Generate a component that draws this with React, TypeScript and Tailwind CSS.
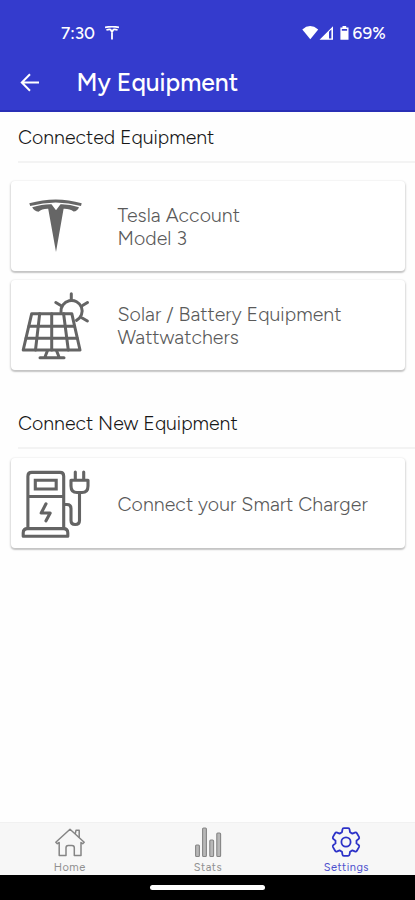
import type { ReactNode } from 'react';

const TeslaIcon = () => (
    <svg width="80" height="80" viewBox="0 0 80 80" fill="#666666">
        <path d="M14.3 17.3Q41 9.7 66.7 17.3L66 20Q41 13 15.2 20Z" />
        <path d="M17.2 21.2Q28 18 36.5 18.3L41 24.3L45.5 18.3Q54 18 64 21.2Q62.5 25 58.5 25.6Q55 22.6 48.6 22.8L41 66L33.2 22.8Q27 22.6 23.5 25.8Q19 25 17.2 21.2Z" />
    </svg>
);

const SolarIcon = () => (
    <svg width="80" height="80" viewBox="0 0 80 80" fill="none" stroke="#646464" strokeWidth="3" strokeLinecap="round" strokeLinejoin="round">
        <path d="M46 27A10.6 10.6 0 1 1 61.5 35.4" />
        <path d="M56.3 8.8v6M40.8 17.5l5 3M72.5 17.5l-5 3M67.2 33l5.2 3" />
        <path d="M16.7 28.7H56.8L65 65H8.2Z" />
        <path d="M14 41.2H59.5M11 53.3H62.2M24.7 28.7L20.5 65M36.7 28.7V65M48.6 28.7L53.3 65M32.5 65.5L30 72M41.5 65.5L44 72M25 72.8H49" />
    </svg>
);

const ChargerIcon = () => (
    <svg width="80" height="80" viewBox="0 0 80 80" fill="none" stroke="#646464" strokeWidth="3.1" strokeLinecap="round" strokeLinejoin="round">
        <path d="M12.9 65V13.2Q12.9 9.4 16.7 9.4H45Q48.7 9.4 48.7 13.2V65M12.9 33.5H48.7" />
        <path d="M8.2 73.3V70Q8.2 65.6 12.5 65.6H48.5Q52.8 65.6 52.8 70V73.3Z" />
        <path d="M20.3 17.2H41.2V26H20.3Z" strokeLinejoin="miter" />
        <path d="M31 40.8L26.2 50H35.2L31 57.8" />
        <path d="M49.5 41.5H52Q56 41.5 56 45.5V57.5Q56 61.5 60.2 61.5Q64.5 61.5 64.5 57.5V29.5" />
        <path d="M56 17.2H73V23Q73 29.5 67 29.5H62Q56 29.5 56 23ZM60.3 9v8M68.7 9v8" />
    </svg>
);

const HomeIcon = () => (
    <svg width="32" height="30" viewBox="0 0 32 30" fill="none" stroke="#858585" strokeWidth="1.5" strokeLinejoin="round" strokeLinecap="round">
        <path d="M1.8 15.2L16 2.2L30.2 15.2L28.7 16.7L27 15.5V28.5H20.3V20.8Q20.3 18.4 18 18.4H14.2Q12 18.4 12 20.8V28.5H5.2V15.5L3.3 16.7Z" />
        <path d="M21.3 6.5L22 3.3H25.2V10.2" />
    </svg>
);

const StatsIcon = () => (
    <svg width="30" height="32" viewBox="0 0 30 32" fill="#b8b8b8" stroke="#858585" strokeWidth="1.1">
        <rect x="2.6" y="18" width="3.8" height="11.5" rx="1" />
        <rect x="9.6" y="1" width="3.8" height="28.5" rx="1" />
        <rect x="16.8" y="13" width="3.8" height="16.5" rx="1" />
        <rect x="23.8" y="6" width="3.8" height="23.5" rx="1" />
    </svg>
);

const SettingsIcon = () => (
    <svg width="30" height="30" viewBox="0 0 30 30" fill="none" stroke="#2d32c8" strokeWidth="1.8" strokeLinejoin="round">
        <path d="M12.8 1.2H17.2Q18.4 1.2 18.6 2.6L19 5.2L21.4 6.6L23.8 5.6Q25.2 5.1 25.9 6.3L28 9.9Q28.6 11.1 27.6 12L25.5 13.6V16.4L27.6 18Q28.6 18.9 28 20.1L25.9 23.7Q25.2 24.9 23.8 24.4L21.4 23.4L19 24.8L18.6 27.4Q18.4 28.8 17.2 28.8H12.8Q11.6 28.8 11.4 27.4L11 24.8L8.6 23.4L6.2 24.4Q4.8 24.9 4.1 23.7L2 20.1Q1.4 18.9 2.4 18L4.5 16.4V13.6L2.4 12Q1.4 11.1 2 9.9L4.1 6.3Q4.8 5.1 6.2 5.6L8.6 6.6L11 5.2L11.4 2.6Q11.6 1.2 12.8 1.2Z" />
        <circle cx="15" cy="15" r="4.6" />
    </svg>
);

interface EquipmentCardProps {
    icon: ReactNode;
    children: ReactNode;
}

const EquipmentCard = ({ icon, children }: EquipmentCardProps) => (
    <button className="w-full h-[90px] flex items-center rounded-[4px] bg-white pl-1 text-left text-[19.5px] leading-[23.5px] font-light tracking-[0.06px] text-[#5a5a5a] shadow-[0_1px_2px_1px_rgba(0,0,0,0.14),0_2px_1px_rgba(0,0,0,0.1)]">
        {icon}
        <span className="ml-[22.5px] pt-[2.5px] whitespace-nowrap">{children}</span>
    </button>
);

const SectionTitle = ({ children }: { children: ReactNode }) => (
    <h2 className="ml-[18px] h-[51px] border-b-2 border-[#f3f3f3] pt-[13px] text-[19.5px] leading-6 font-light text-[#171717]">
        {children}
    </h2>
);

const App = () => {
    return (
        <div className="w-[415px] h-[900px] flex flex-col overflow-hidden bg-[#fefefe] font-['Figtree','Lato',sans-serif]">
            <header className="h-[112px] shrink-0 border-b-2 border-[#292fb6] bg-[#343bcd] text-white">
                {/* Status bar */}
                <div className="h-[54px] pt-[11px] pl-[61px] pr-[29px] flex items-center text-[17px] leading-5 font-medium">
                    <span>7:30</span>
                    <svg className="ml-[10px]" width="14" height="14" viewBox="0 0 14 14" fill="none" stroke="white" strokeWidth="1.8">
                        <path d="M0 1.4Q7 0 14 1.4M1.4 4Q4 3.2 5.5 3.6L7 6L8.5 3.6Q10 3.2 12.6 4M7 5V13.5" />
                    </svg>
                    <svg className="ml-auto" width="48" height="16" viewBox="0 0 48 16" fill="white">
                        <path d="M.3 4.4Q8 -2.4 16.2 4.4L8.3 14.3Z" />
                        <path d="M17.5 14.8L31 1.2V14.8ZM27 6.7V13.4H29.4V4.4Z" fillRule="evenodd" />
                        <path d="M38.4 2.4H40.5V1H44.2V2.4H46.5V14.8H38.4ZM39.8 4V5.8H45.1V4Z" fillRule="evenodd" />
                    </svg>
                    <span className="ml-[3px] tracking-[0.2px]">69%</span>
                </div>
                <div className="h-[57px] flex items-center pl-5">
                    <svg width="20" height="20" viewBox="0 0 20 20" fill="none" stroke="white" strokeWidth="2">
                        <path d="M19 9.5H2.5M10 1.3L1.8 9.5L10 17.7" />
                    </svg>
                    <h1 className="ml-[36.5px] text-[24.7px] leading-8 font-medium">My Equipment</h1>
                </div>
            </header>

            <main className="flex-1">
                <SectionTitle>Connected Equipment</SectionTitle>
                <div className="mt-[18px] ml-[11px] mr-[10px] flex flex-col gap-[9px]">
                    <EquipmentCard icon={<TeslaIcon />}>
                        Tesla Account
                        <br />
                        Model 3
                    </EquipmentCard>
                    <EquipmentCard icon={<SolarIcon />}>
                        Solar / Battery Equipment
                        <br />
                        Wattwatchers
                    </EquipmentCard>
                </div>

                <div className="mt-[28px]">
                    <SectionTitle>Connect New Equipment</SectionTitle>
                </div>
                <div className="mt-[9px] ml-[11px] mr-[10px]">
                    <EquipmentCard icon={<ChargerIcon />}>Connect your Smart Charger</EquipmentCard>
                </div>
            </main>

            {/* Bottom navigation */}
            <nav className="h-[53px] shrink-0 grid grid-cols-3 border-t border-[#f1f1f1] bg-[#f7f7f7] text-[11px] leading-3 tracking-[0.5px] text-[#909090]">
                <div className="flex flex-col items-center pt-1 pl-px">
                    <div className="h-[35px]"><HomeIcon /></div>
                    <span>Home</span>
                </div>
                <div className="flex flex-col items-center pt-1 pl-px">
                    <div className="h-[35px]"><StatsIcon /></div>
                    <span>Stats</span>
                </div>
                <div className="flex flex-col items-center pt-1 pl-px text-[#4b4fcd]">
                    <div className="h-[35px]"><SettingsIcon /></div>
                    <span>Settings</span>
                </div>
            </nav>
            <div className="h-[25px] shrink-0 flex justify-center bg-black pt-[10px]">
                <div className="h-[5px] w-[115px] rounded-full bg-white" />
            </div>
        </div>
    );
};

export default App;
